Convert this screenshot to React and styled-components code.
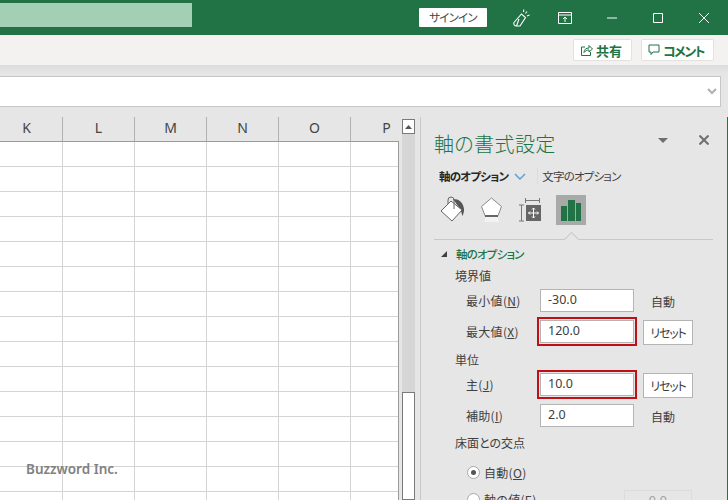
import React from "react";
import styled, { createGlobalStyle } from "styled-components";

const GlobalStyle = createGlobalStyle`
  html, body {
    margin: 0;
    padding: 0;
    background: #e6e6e6;
  }
  body {
    font-family: "Noto Sans CJK JP", "Noto Sans", sans-serif;
  }
  * {
    box-sizing: border-box;
    font-feature-settings: "palt";
  }
`;

const green = "#217346";

const Window = styled.div`
  display: flex;
  flex-direction: column;
  width: 728px;
  height: 500px;
  overflow: hidden;
  position: relative;
  background: #e6e6e6;
`;

const TitleBar = styled.header`
  display: flex;
  align-items: center;
  flex: 0 0 35px;
  background: ${green};
`;

const SearchBox = styled.div`
  width: 192px;
  height: 24px;
  margin-top: -5px;
  background: #a3cfb4;
`;

const SignIn = styled.button`
  width: 68px;
  height: 19px;
  margin-left: 227px;
  padding: 0;
  border: 0;
  border-radius: 1px;
  background: #fff;
  color: #444;
  font-family: inherit;
  font-size: 11.5px;
  letter-spacing: -0.8px;
  line-height: 19px;
`;

const TitleIcon = styled.svg`
  display: block;
  flex: none;
  margin-left: ${(p) => p.$left}px;
`;

const RibbonStrip = styled.div`
  display: flex;
  align-items: center;
  justify-content: flex-end;
  gap: 9px;
  flex: 0 0 30px;
  padding-right: 14px;
  background: #f3f2f1;
`;

const RibbonButton = styled.button`
  display: flex;
  align-items: center;
  gap: 3px;
  width: ${(p) => p.$width}px;
  height: 22px;
  padding: 0 0 0 6px;
  border: 1px solid #e4e2e0;
  border-radius: 2px;
  background: #fff;
  color: ${green};
  font-family: inherit;
  font-size: 13px;
  font-weight: 700;
  letter-spacing: ${(p) => p.$spacing || 0}px;
`;

const FormulaArea = styled.div`
  flex: 0 0 52px;
  padding: 11px 7px 0 0;
  background: linear-gradient(#dcdcdc, #e6e6e6 9px);
`;

const FormulaBar = styled.div`
  display: flex;
  align-items: center;
  justify-content: flex-end;
  height: 31px;
  padding-right: 3px;
  border: 1px solid #c6c6c6;
  border-left: 0;
  background: #fff;
`;

const Workspace = styled.div`
  display: flex;
  flex: 1;
  min-height: 0;
`;

const Sheet = styled.section`
  flex: 0 0 399px;
  overflow: hidden;
`;

const Columns = styled.div`
  display: grid;
  grid-template-columns: repeat(6, 72px);
  height: 24px;
  width: 432px;
  margin-left: -9px;
`;

const ColumnHead = styled.div`
  display: flex;
  align-items: center;
  justify-content: center;
  padding-bottom: 2px;
  border-right: 1px solid #b1b1b1;
  color: #444;
  font-family: "Noto Sans", sans-serif;
  font-size: 14px;
  line-height: 22px;
`;

const GridFrame = styled.div`
  height: 400px;
  border-top: 1px solid #9b9b9b;
  border-right: 1px solid #9b9b9b;
  background: #fff;
  overflow: hidden;
`;

const Grid = styled.div`
  display: grid;
  grid-template-columns: repeat(6, 72px);
  grid-auto-rows: 25px;
  width: 432px;
  margin-left: -9px;
`;

const Cell = styled.div`
  border-right: 1px solid #d4d4d4;
  border-bottom: 1px solid #d4d4d4;
`;

const Scrollbar = styled.div`
  display: flex;
  flex-direction: column;
  flex: 0 0 22px;
  padding: 2px 5px 0 3px;
  border-right: 1px solid #c8c8c8;
`;

const ScrollUp = styled.div`
  display: flex;
  align-items: center;
  justify-content: center;
  flex: 0 0 15px;
  border: 1px solid #7a7a7a;
  background: #fff;
`;

const ScrollTrack = styled.div`
  flex: 0 0 258px;
  background: #d6d6d6;
`;

const ScrollThumb = styled.div`
  flex: 1;
  border: 1px solid #7a7a7a;
  background: #fff;
`;

const Panel = styled.aside`
  flex: 1;
  padding: 0 13px;
  border-right: 1px solid ${green};
  color: #404040;
  font-size: 12px;
`;

const PanelHead = styled.div`
  display: flex;
  align-items: center;
  height: 30px;
  margin-top: 12px;
`;

const PanelTitle = styled.h1`
  flex: 1;
  margin: 0;
  color: ${green};
  font-size: 20px;
  font-weight: 300;
  letter-spacing: 0.4px;
  line-height: 30px;
`;

const PanelCaret = styled.span`
  width: 0;
  height: 0;
  margin-top: -8px;
  margin-right: 31px;
  border-left: 5px solid transparent;
  border-right: 5px solid transparent;
  border-top: 5px solid #6e6e6e;
`;

const PanelClose = styled.svg`
  display: block;
  margin-top: -8px;
  margin-right: 5px;
`;

const TabRow = styled.div`
  display: flex;
  align-items: center;
  height: 20px;
  margin-top: 7px;
  padding-left: 5px;
  font-size: 11.5px;
  letter-spacing: -0.8px;
  white-space: nowrap;
`;

const Tab = styled.span`
  color: ${(p) => (p.$active ? "#262626" : "#404040")};
  font-weight: ${(p) => (p.$active ? 700 : 400)};
`;

const TabChevron = styled.svg`
  display: block;
  margin-left: 6px;
`;

const TabDivider = styled.span`
  width: 1px;
  height: 16px;
  margin: 0 4px 0 11px;
  background: #dcdcdc;
`;

const IconRow = styled.div`
  display: flex;
  gap: 9px;
  height: 30px;
  margin-top: 9px;
  padding-left: 3px;
`;

const IconTab = styled.div`
  display: flex;
  align-items: center;
  justify-content: center;
  flex: 0 0 30px;
  height: 30px;
  margin-left: ${(p) => (p.$active ? 2 : 0)}px;
  background: ${(p) => (p.$active ? "#a9a9a9" : "transparent")};
`;

const IconDivider = styled.div`
  position: relative;
  width: 279px;
  height: 1px;
  margin-top: 14px;
  background: #c8c8c8;
  &::after {
    content: "";
    position: absolute;
    left: 132px;
    top: -5px;
    width: 10px;
    height: 10px;
    transform: rotate(45deg);
    border-top: 1px solid #c8c8c8;
    border-left: 1px solid #c8c8c8;
    background: #e6e6e6;
  }
`;

const SectionHead = styled.div`
  display: flex;
  align-items: center;
  height: 20px;
  margin-top: 4px;
  padding-left: 7px;
  color: ${green};
  font-size: 11.5px;
  font-weight: 500;
  letter-spacing: -0.8px;
`;

const Triangle = styled.span`
  width: 0;
  height: 0;
  margin-right: 9px;
  border-left: 6px solid transparent;
  border-bottom: 6px solid #404040;
`;

const GroupLabel = styled.div`
  height: 18px;
  margin-top: ${(p) => p.$top}px;
  padding-left: 21px;
  font-size: 12px;
  line-height: 18px;
`;

const FieldRow = styled.div`
  display: flex;
  align-items: center;
  height: 23px;
  margin-top: ${(p) => p.$top}px;
`;

const FieldLabel = styled.label`
  flex: 0 0 106px;
  padding-left: 32px;
  font-size: 12px;
  letter-spacing: 0.3px;
  white-space: nowrap;
  u {
    text-underline-offset: 1px;
  }
`;

const Input = styled.div`
  position: relative;
  flex: 0 0 94px;
  height: 23px;
  padding-left: 7px;
  border: 1px solid ${(p) => (p.$disabled ? "#dcdcdc" : "#b4b4b4")};
  background: ${(p) => (p.$disabled ? "#e6e6e6" : "#fff")};
  color: ${(p) => (p.$disabled ? "#a0a0a0" : "#404040")};
  font-family: "Noto Sans", sans-serif;
  font-size: 12.5px;
  line-height: 19px;
  ${(p) =>
    p.$marked &&
    `&::after {
      content: "";
      position: absolute;
      inset: -4px;
      border: 2px solid #c00f16;
    }`}
`;

const AutoText = styled.span`
  margin-left: 17px;
  margin-top: 1px;
  font-size: 12px;
`;

const ResetButton = styled.button`
  flex: 0 0 50px;
  height: 25px;
  margin-left: 9px;
  margin-top: 2px;
  padding: 0;
  border: 1px solid #b4b4b4;
  background: #fff;
  color: #404040;
  font-family: inherit;
  font-size: 12px;
  letter-spacing: -1.2px;
`;

const RadioRow = styled.div`
  display: flex;
  align-items: center;
  height: 23px;
  margin-top: ${(p) => p.$top}px;
  padding-left: 33px;
  font-size: 12px;
  letter-spacing: 0.3px;
  white-space: nowrap;
`;

const Radio = styled.span`
  display: flex;
  align-items: center;
  justify-content: center;
  flex: 0 0 13px;
  height: 13px;
  margin-right: 4px;
  border: 1px solid #a8a8a8;
  border-radius: 50%;
  background: #fff;
  &::after {
    content: "";
    display: ${(p) => (p.$checked ? "block" : "none")};
    width: 5px;
    height: 5px;
    border-radius: 50%;
    background: #555;
  }
`;

const RadioLabel = styled.span`
  flex: 0 0 140px;
`;

const SmallInput = styled(Input)`
  flex: 0 0 68px;
  margin-top: 4px;
  padding-left: 0;
  text-align: center;
`;

const Watermark = styled.div`
  position: absolute;
  left: 26px;
  top: 460px;
  color: #808080;
  font-family: "Noto Sans", sans-serif;
  font-size: 13.5px;
  font-weight: 600;
  line-height: 19px;
`;

const columns = ["K", "L", "M", "N", "O", "P"];
const cells = Array.from({ length: 96 });

function App() {
  return (
    <Window>
      <GlobalStyle />
      <TitleBar>
        <SearchBox />
        <SignIn>サインイン</SignIn>
        <TitleIcon $left={24} width="20" height="20" viewBox="0 0 20 20" fill="none" stroke="#fff" strokeWidth="1.1">
          <path d="M3 14.5 10.5 6l4 3.5-5.5 8.5H5.500a2.500 2.500 0 0 1-2.500-3.500Z" />
          <path d="M5.500 18 8 11M14.500 5.500l1.500-2M16 8l2.500-1M12.500 4l.3-2.500" />
        </TitleIcon>
        <TitleIcon $left={27} width="14" height="14" viewBox="0 0 14 14" fill="none" stroke="#fff" strokeWidth="1">
          <path d="M.5 1.500h13v11H.5zM.5 4h13M7 11V6M5 8l2-2 2 2" />
        </TitleIcon>
        <TitleIcon $left={35} width="10" height="2" viewBox="0 0 10 2" fill="none" stroke="#fff" strokeWidth="1">
          <path d="M0 1h10" />
        </TitleIcon>
        <TitleIcon $left={36} width="10" height="10" viewBox="0 0 10 10" fill="none" stroke="#fff" strokeWidth="1">
          <path d="M.5.5h9v9h-9z" />
        </TitleIcon>
        <TitleIcon $left={36} width="10" height="10" viewBox="0 0 10 10" fill="none" stroke="#fff" strokeWidth="1">
          <path d="m0 0 10 10M10 0 0 10" />
        </TitleIcon>
      </TitleBar>

      <RibbonStrip>
        <RibbonButton $width={59}>
          <svg width="13" height="13" viewBox="0 0 13 13" fill="none" stroke={green} strokeWidth="1">
            <path d="M5 3H1.500v8.500h9V8M4 8.500C4 5.500 6 4 9 4V1.500L12.500 5 9 8V6C7 6 5.500 6.700 4 8.500Z" />
          </svg>
          共有
        </RibbonButton>
        <RibbonButton $width={73} $spacing={-1.5}>
          <svg width="12" height="12" viewBox="0 0 12 12" fill="none" stroke={green} strokeWidth="1">
            <path d="M1 1h10v7H5l-2 2.500V8H1z" />
          </svg>
          コメント
        </RibbonButton>
      </RibbonStrip>

      <FormulaArea>
        <FormulaBar>
          <svg width="10" height="7" viewBox="0 0 10 7" fill="none" stroke="#b0b0b0" strokeWidth="2">
            <path d="m1 1 4 4 4-4" />
          </svg>
        </FormulaBar>
      </FormulaArea>

      <Workspace>
        <Sheet>
          <Columns>
            {columns.map((c) => (
              <ColumnHead key={c}>{c}</ColumnHead>
            ))}
          </Columns>
          <GridFrame>
            <Grid>
              {cells.map((_, i) => (
                <Cell key={i} />
              ))}
            </Grid>
          </GridFrame>
        </Sheet>

        <Scrollbar>
          <ScrollUp>
            <svg width="7" height="4" viewBox="0 0 7 4">
              <path d="M0 4 3.500 0 7 4z" fill="#555" />
            </svg>
          </ScrollUp>
          <ScrollTrack />
          <ScrollThumb />
        </Scrollbar>

        <Panel>
          <PanelHead>
            <PanelTitle>軸の書式設定</PanelTitle>
            <PanelCaret />
            <PanelClose width="10" height="10" viewBox="0 0 10 10" fill="none" stroke="#6e6e6e" strokeWidth="2">
              <path d="m0.5 0.5 9 9M9.500 0.5l-9 9" />
            </PanelClose>
          </PanelHead>

          <TabRow>
            <Tab $active>軸のオプション</Tab>
            <TabChevron width="12" height="7" viewBox="0 0 12 7" fill="none" stroke="#5b9bd5" strokeWidth="1.4">
              <path d="m1 1 5 5 5-5" />
            </TabChevron>
            <TabDivider />
            <Tab>文字のオプション</Tab>
          </TabRow>

          <IconRow>
            <IconTab>
              <svg width="28" height="28" viewBox="0 0 28 28">
                <path d="M15 3c6 0 10 3 11 10 .2 2-.5 5-1.500 7-1-2-1-5-2.500-7z" fill="#555" />
                <path d="M13 5 24 14 14 25 3 15z" fill="#fff" stroke="#666" strokeWidth="1" />
                <path d="M10 8V4a3 3 0 0 1 6 0v9" fill="none" stroke="#666" strokeWidth="1" />
              </svg>
            </IconTab>
            <IconTab>
              <svg width="24" height="28" viewBox="0 0 24 28">
                <path d="M12.500 2 22.500 10.500 19 19.700H6L2.500 10.500z" fill="#fff" stroke="#888" strokeWidth="1" />
                <path d="M6 20h13" stroke="#666" strokeWidth="2" />
                <path d="M6.500 21h12l1.500 5H5z" fill="#f2f2f2" />
              </svg>
            </IconTab>
            <IconTab>
              <svg width="24" height="28" viewBox="0 0 24 28" fill="none">
                <path d="M7.500 2v5M21.500 2v5M7.500 4.500h14M1 9h5M1 25h5M3.500 9v16" stroke="#777" strokeWidth="1" />
                <rect x="8" y="9" width="15" height="16" fill="#666" />
                <path d="M15.500 12v10M10.500 17h10M14 13.500l1.500-1.500 1.500 1.500M14 20.500l1.500 1.500 1.500-1.500M12 15.500 10.500 17l1.500 1.500M19 15.500l1.500 1.500-1.500 1.500" stroke="#fff" strokeWidth="1" />
              </svg>
            </IconTab>
            <IconTab $active>
              <svg width="20" height="21" viewBox="0 0 20 21">
                <path d="M0 6h6v15H0zM7 0h7v21H7zM15 3h5v18h-5z" fill={green} />
              </svg>
            </IconTab>
          </IconRow>
          <IconDivider />

          <SectionHead>
            <Triangle />
            軸のオプション
          </SectionHead>

          <GroupLabel $top={3}>境界値</GroupLabel>
          <FieldRow $top={4}>
            <FieldLabel>
              最小値(<u>N</u>)
            </FieldLabel>
            <Input>-30.0</Input>
            <AutoText>自動</AutoText>
          </FieldRow>
          <FieldRow $top={8}>
            <FieldLabel>
              最大値(<u>X</u>)
            </FieldLabel>
            <Input $marked>120.0</Input>
            <ResetButton>リセット</ResetButton>
          </FieldRow>
          <GroupLabel $top={8}>単位</GroupLabel>
          <FieldRow $top={4}>
            <FieldLabel>
              主(<u>J</u>)
            </FieldLabel>
            <Input $marked>10.0</Input>
            <ResetButton>リセット</ResetButton>
          </FieldRow>
          <FieldRow $top={8}>
            <FieldLabel>
              補助(<u>I</u>)
            </FieldLabel>
            <Input>2.0</Input>
            <AutoText>自動</AutoText>
          </FieldRow>
          <GroupLabel $top={7}>床面との交点</GroupLabel>
          <RadioRow $top={9}>
            <Radio $checked />
            <RadioLabel>
              自動(<u>O</u>)
            </RadioLabel>
          </RadioRow>
          <RadioRow $top={4}>
            <Radio />
            <RadioLabel>
              軸の値(<u>E</u>)
            </RadioLabel>
            <SmallInput $disabled>0.0</SmallInput>
          </RadioRow>
        </Panel>
      </Workspace>

      <Watermark>Buzzword Inc.</Watermark>
    </Window>
  );
}

export default App;
